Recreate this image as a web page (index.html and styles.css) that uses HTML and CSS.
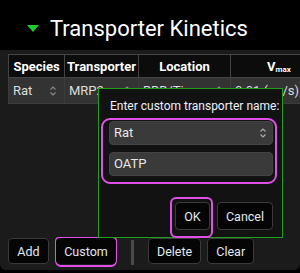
FILE: index.html
```html
<!DOCTYPE html>
<html lang="en">
<head>
  <meta charset="UTF-8" />
  <title>Transporter Kinetics</title>
  <link rel="stylesheet" href="styles.css">
</head>
<body>
  <h2 class="section-title"><span class="caret"></span>Transporter Kinetics</h2>
  <div class="panel">
    <div class="table-wrap">
      <table class="kinetics">
        <colgroup>
          <col class="c-species"><col class="c-transporter"><col class="c-location"><col class="c-vmax">
        </colgroup>
        <thead>
          <tr>
            <th>Species</th>
            <th>Transporter</th>
            <th>Location</th>
            <th>V<sub>max</sub></th>
          </tr>
        </thead>
        <tbody>
          <tr>
            <td><span class="cell-select">Rat<svg class="arrows" viewBox="0 0 8 12"><path d="M1.5 4.5 4 2 6.5 4.5M1.5 7.5 4 10 6.5 7.5"/></svg></span></td>
            <td><span class="cell-select">MRP2<svg class="arrows" viewBox="0 0 8 12"><path d="M1.5 4.5 4 2 6.5 4.5M1.5 7.5 4 10 6.5 7.5"/></svg></span></td>
            <td><span class="cell-select">BBB/Tissue<svg class="arrows" viewBox="0 0 8 12"><path d="M1.5 4.5 4 2 6.5 4.5M1.5 7.5 4 10 6.5 7.5"/></svg></span></td>
            <td>0.01 (ug/s)</td>
          </tr>
        </tbody>
      </table>
    </div>

    <div class="actions">
      <button class="btn btn-add">Add</button>
      <span class="mark mark-custom"><button class="btn">Custom</button></span>
      <span class="divider"></span>
      <button class="btn">Delete</button>
      <button class="btn btn-clear">Clear</button>
    </div>

    <!-- custom transporter popup -->
    <div class="dialog">
      <p class="dialog-label">Enter custom transporter name:</p>
      <div class="mark mark-fields">
        <div class="field select-field">Rat<svg class="arrows" viewBox="0 0 8 12"><path d="M1.5 4.5 4 2 6.5 4.5M1.5 7.5 4 10 6.5 7.5"/></svg></div>
        <div class="field">OATP</div>
      </div>
      <div class="dialog-buttons">
        <span class="mark mark-ok"><button class="btn btn-ok">OK</button></span>
        <button class="btn btn-cancel">Cancel</button>
      </div>
    </div>
  </div>
</body>
</html>
```

FILE: styles.css
```css
body {
  margin: 0;
  background: #000;
  color: #fff;
  font-family: Roboto, "Liberation Sans", sans-serif;
  width: 300px;
  height: 273px;
  overflow: hidden;
}
.section-title {
  margin: 0;
  height: 50px;
  padding: 8px 0 0 27px;
  box-sizing: border-box;
  font-size: 22px;
  font-weight: 400;
  line-height: 28px;
  display: flex;
  align-items: center;
  align-self: flex-start;
}
.caret {
  width: 0;
  height: 0;
  border-left: 6px solid transparent;
  border-right: 6px solid transparent;
  border-top: 7px solid #1fcc2a;
  margin-right: 11px;
  margin-top: -2px;
}
.panel {
  position: relative;
  background: #1b1b1b;
  border-radius: 0 0 6px 6px;
  height: 220px;
  padding: 4px 0 0 8px;
  box-sizing: border-box;
  width: 300px;
}
.table-wrap {
  height: 184px;
  overflow: hidden;
}
.kinetics {
  border-collapse: collapse;
  table-layout: fixed;
  width: 320px;
  font-size: 13px;
}
.c-species { width: 56px; }
.c-transporter { width: 74px; }
.c-location { width: 92px; }
.kinetics th {
  background: #0c0c0c;
  border: 1px solid #444;
  height: 22px;
  padding: 0;
  font-weight: 700;
  text-align: center;
}
.kinetics th sub {
  font-size: 8px;
  vertical-align: -1px;
}
.kinetics td {
  background: #333;
  border: 1px solid #3c3c3c;
  border-top: none;
  height: 25px;
  padding: 0 4px;
  color: #ddd;
  white-space: nowrap;
  overflow: hidden;
}
.cell-select {
  display: flex;
  justify-content: space-between;
  align-items: center;
}
.arrows {
  width: 8px;
  height: 12px;
  fill: none;
  stroke: #8a8a8a;
  stroke-width: 1.2;
  margin-right: 3px;
  flex: none;
}
.actions {
  display: flex;
  align-items: flex-start;
  height: 32px;
}
.btn {
  background: #050505;
  color: #e0e8f0;
  border: 1px solid #3a3a3a;
  border-radius: 4px;
  font-family: inherit;
  font-size: 12.5px;
  height: 26px;
  padding: 0 8px;
  margin: 0;
}
.btn-add { width: 41px; margin-right: 6px; }
.btn-clear { margin-left: 6px; width: 47px; }
.mark {
  display: inline-flex;
  border: 2px solid #e050e8;
  border-radius: 6px;
}
.mark-custom {
  border-radius: 4px 4px 6px 6px;
  padding-bottom: 2px;
  margin-top: -1px;
}
.mark-custom .btn {
  width: 60px;
  border: none;
  margin: -1px;
}
.divider {
  width: 3px;
  height: 25px;
  background: #4a4a4a;
  margin: 2px 14px 0 14px;
}
.dialog {
  position: absolute;
  left: 98px;
  top: 38px;
  width: 185px;
  height: 150px;
  box-sizing: border-box;
  background: #121212;
  border: 1px solid #21a01c;
  padding: 0 9px 0 2px;
}
.dialog-label {
  margin: 9px 0 0 9px;
  font-size: 12px;
  line-height: 16px;
  color: #eef;
  height: 20px;
  white-space: nowrap;
}
.mark-fields {
  display: flex;
  flex-direction: column;
  gap: 7px;
  border-radius: 9px;
  padding: 1px 2px 6px 6px;
  box-sizing: border-box;
  width: 176px;
}
.field {
  background: #3a3a3a;
  border: 1px solid #444;
  border-radius: 4px;
  height: 22px;
  line-height: 22px;
  padding: 0 4px;
  font-size: 13px;
  color: #e8e8e8;
}
.select-field {
  display: flex;
  justify-content: space-between;
  align-items: center;
}
.select-field .arrows { margin-right: 1px; stroke: #aaa; }
.dialog-buttons {
  display: flex;
  justify-content: flex-end;
  align-items: flex-start;
  margin-top: 13px;
  gap: 4px;
}
.mark-ok {
  padding: 3px 1px 6px 3px;
}
.btn-ok { height: 28px; width: 35px; padding: 0; }
.btn-cancel { height: 28px; margin-top: 5px; width: 56px; padding: 0; }
```
